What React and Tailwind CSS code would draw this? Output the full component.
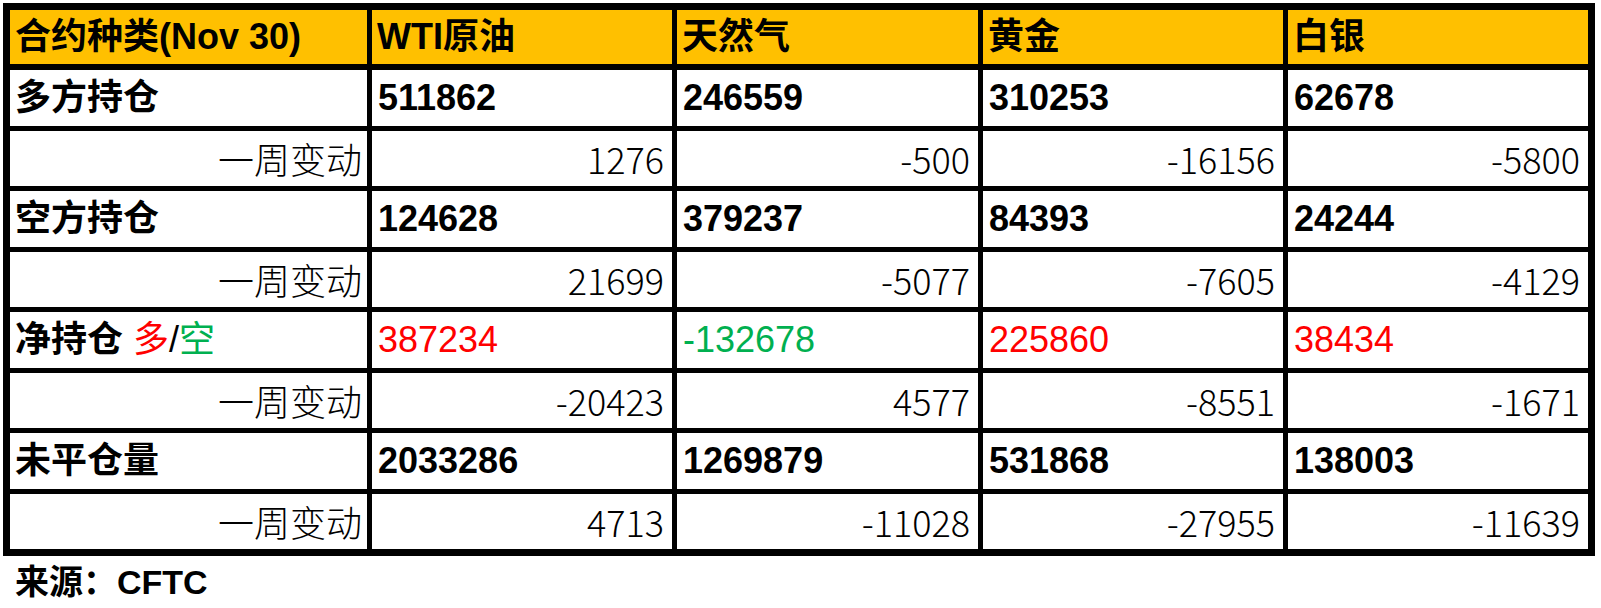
import React from "react";

const cols = "grid grid-cols-[357px_300px_301px_300px_300px] gap-x-[5px]";
const boldFont = { fontFamily: '"Liberation Sans", "Noto Sans CJK SC", sans-serif' };
const thinFont = { fontFamily: '"Noto Sans CJK SC", "Liberation Sans", sans-serif' };

const header = ["合约种类(Nov 30)", "WTI原油", "天然气", "黄金", "白银"];

const groups = [
  { label: "多方持仓", values: ["511862", "246559", "310253", "62678"], change: ["1276", "-500", "-16156", "-5800"] },
  { label: "空方持仓", values: ["124628", "379237", "84393", "24244"], change: ["21699", "-5077", "-7605", "-4129"] },
  { net: true, values: ["387234", "-132678", "225860", "38434"], change: ["-20423", "4577", "-8551", "-1671"] },
  { label: "未平仓量", values: ["2033286", "1269879", "531868", "138003"], change: ["4713", "-11028", "-27955", "-11639"] },
];

function MainRow({ g }) {
  return (
    <div className={cols + " h-[55.5px]"}>
      <div className="bg-white flex items-center pl-[5px] text-[36px] font-bold text-black" style={boldFont}>
        {g.net ? (
          <span>
            净持仓 <span className="text-[#ff0000] font-normal">多</span>
            <span className="font-normal">/</span>
            <span className="text-[#00b050] font-normal">空</span>
          </span>
        ) : (
          g.label
        )}
      </div>
      {g.values.map((v, i) => {
        let color = "text-black font-bold";
        if (g.net) color = v.startsWith("-") ? "text-[#00b050] font-normal" : "text-[#ff0000] font-normal";
        return (
          <div key={i} className={"bg-white flex items-center pl-[6px] text-[36px] " + color} style={boldFont}>
            {v}
          </div>
        );
      })}
    </div>
  );
}

function ChangeRow({ g }) {
  return (
    <div className={cols + " h-[55.5px]"}>
      <div className="bg-white flex items-center justify-end pr-[5px] text-[36px] font-light text-black" style={thinFont}>
        一周变动
      </div>
      {g.change.map((v, i) => (
        <div key={i} className="bg-white flex items-center justify-end pr-[8px] text-[36px] font-light text-black" style={thinFont}>
          {v}
        </div>
      ))}
    </div>
  );
}

export default function App() {
  return (
    <div className="bg-white w-[1601px] h-[608px] pt-[3px] pl-[3px]">
      <div className="w-[1592px] border-[7px] border-black bg-black flex flex-col">
        <div className={cols + " h-[53px] mb-[7px]"}>
          {header.map((h, i) => (
            <div key={i} className="bg-[#ffc000] flex items-center pl-[5px] text-[36px] font-bold text-black" style={boldFont}>
              {h}
            </div>
          ))}
        </div>
        <div className="flex flex-col gap-y-[5px]">
          {groups.map((g, i) => (
            <React.Fragment key={i}>
              <MainRow g={g} />
              <ChangeRow g={g} />
            </React.Fragment>
          ))}
        </div>
      </div>
      <div className="mt-[6px] h-[40px] leading-[40px] pl-[12px] text-[34px] font-bold text-black" style={boldFont}>
        来源：CFTC
      </div>
    </div>
  );
}
